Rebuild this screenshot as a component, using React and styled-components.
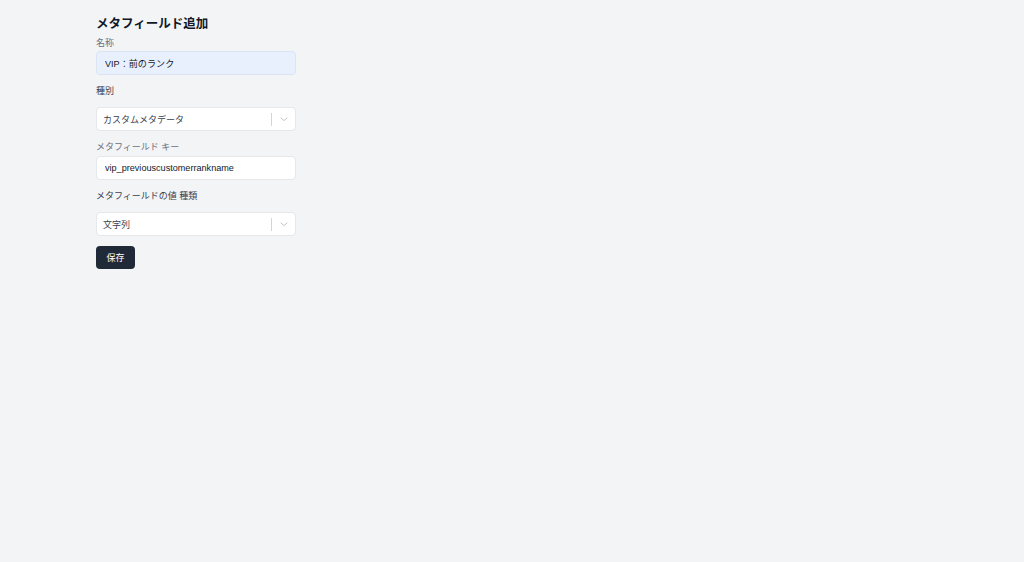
import React from 'react';
import styled, { createGlobalStyle } from 'styled-components';

const GlobalStyle = createGlobalStyle`
  html, body {
    margin: 0;
    padding: 0;
    background: #f3f4f6;
  }
  body {
    font-family: "Liberation Sans", "Noto Sans CJK JP", sans-serif;
    color: #111827;
  }
`;

const Page = styled.div`
  min-height: 562px;
  padding: 16px 0 0 96px;
  box-sizing: border-box;
`;

const Form = styled.form`
  width: 200px;
  display: flex;
  flex-direction: column;
`;

const Title = styled.h1`
  margin: 0 0 5px;
  font-size: 12.5px;
  line-height: 16px;
  font-weight: 700;
  color: #111827;
`;

const Label = styled.label`
  display: block;
  font-size: 9px;
  line-height: 12px;
  color: ${({ muted }) => (muted ? '#6b7280' : '#374151')};
  margin: ${({ top = 0 }) => top}px 0 ${({ bottom = 2 }) => bottom}px;
`;

const TextInput = styled.input`
  box-sizing: border-box;
  width: 100%;
  height: 24px;
  padding: 0 8px;
  border: 1px solid ${({ filled }) => (filled ? '#dbe4f3' : '#e5e7eb')};
  border-radius: 4px;
  background: ${({ filled }) => (filled ? '#e8f0fe' : '#ffffff')};
  font-family: "Liberation Sans", "Noto Sans CJK JP", sans-serif;
  font-size: 9.1px;
  color: #111827;
  outline: none;
`;

const Select = styled.div`
  box-sizing: border-box;
  width: 100%;
  height: 24px;
  display: flex;
  align-items: center;
  border: 1px solid #e5e7eb;
  border-radius: 4px;
  background: #ffffff;
`;

const SelectValue = styled.div`
  flex: 1;
  padding-left: 6px;
  font-size: 9px;
  color: #374151;
`;

const Separator = styled.span`
  width: 1px;
  height: 13px;
  background: #d1d5db;
`;

const Indicator = styled.span`
  width: 23px;
  display: flex;
  justify-content: center;
  align-items: center;
  color: #c4c4c4;
`;

const Button = styled.button`
  align-self: flex-start;
  margin-top: 10px;
  height: 23px;
  padding: 0 10.5px;
  border: none;
  border-radius: 4px;
  background: #1f2937;
  color: #ffffff;
  font-family: "Liberation Sans", "Noto Sans CJK JP", sans-serif;
  font-size: 9px;
  cursor: pointer;
`;

const Chevron = () => (
  <svg width="10" height="10" viewBox="0 0 10 10" fill="none" stroke="currentColor" strokeWidth="1" strokeLinecap="round" strokeLinejoin="round">
    <path d="M2 4l3 2.6L8 4" />
  </svg>
);

const Dropdown = ({ value }) => (
  <Select>
    <SelectValue>{value}</SelectValue>
    <Separator />
    <Indicator><Chevron /></Indicator>
  </Select>
);

export default function App() {
  return (
    <>
      <GlobalStyle />
      <Page>
        <Form onSubmit={(e) => e.preventDefault()}>
          <Title>メタフィールド追加</Title>
          <Label muted>名称</Label>
          <TextInput filled defaultValue="VIP：前のランク" />
          <Label top={10} bottom={10}>種別</Label>
          <Dropdown value="カスタムメタデータ" />
          <Label muted top={10} bottom={3}>メタフィールド キー</Label>
          <TextInput defaultValue="vip_previouscustomerrankname" />
          <Label top={10} bottom={10}>メタフィールドの値 種類</Label>
          <Dropdown value="文字列" />
          <Button type="submit">保存</Button>
        </Form>
      </Page>
    </>
  );
}
